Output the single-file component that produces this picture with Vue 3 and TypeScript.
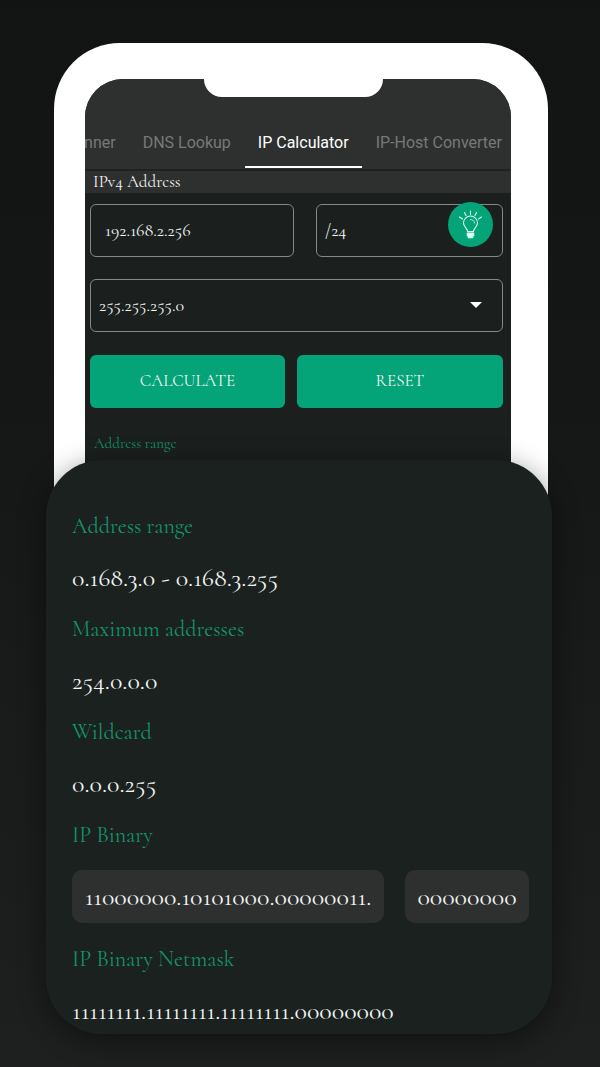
<script setup lang="ts">
import { ref } from 'vue'

interface Result {
  label: string
  value?: string
  parts?: string[]
}

const tabs = ['Scanner', 'DNS Lookup', 'IP Calculator', 'IP-Host Converter']
const activeTab = ref('IP Calculator')
const address = ref('192.168.2.256')
const prefix = ref('/24')
const netmask = ref('255.255.255.0')

const results: Result[] = [
  { label: 'Address range', value: '0.168.3.0 - 0.168.3.255' },
  { label: 'Maximum addresses', value: '254.0.0.0' },
  { label: 'Wildcard', value: '0.0.0.255' },
  { label: 'IP Binary', parts: ['11000000.10101000.00000011.', '00000000'] },
  { label: 'IP Binary Netmask', value: '11111111.11111111.11111111.00000000' },
]

function reset() {
  address.value = ''
  prefix.value = ''
}
</script>

<template>
  <main class="page">
    <section class="phone">
      <div class="screen">
        <div class="notch"></div>
        <nav class="tabs">
          <button
            v-for="tab in tabs"
            :key="tab"
            type="button"
            class="tab"
            :class="{ active: tab === activeTab }"
            @click="activeTab = tab"
          >{{ tab }}</button>
        </nav>
        <label class="band" for="address">IPv4 Address</label>
        <form class="form" @submit.prevent>
          <div class="fields">
            <input id="address" v-model="address" class="control address" type="text" />
            <div class="prefix">
              <input v-model="prefix" class="control" type="text" aria-label="Prefix length" />
              <button class="hint" type="button" aria-label="Hint">
                <svg viewBox="0 0 45 45" width="45" height="45" fill="none" stroke="#d9fff0" stroke-width="1.1" stroke-linecap="round" stroke-linejoin="round">
                  <path d="M19.5 29.500c0-3.500-4-4.500-4-8.500a7 7 0 0 1 14 0c0 4-4 5-4 8.500z" />
                  <path d="M22.500 17.500a3.500 3.500 0 0 1 4 3.500" stroke-width="0.8" />
                  <path d="M19.500 31.500h6M19.500 33.500h6M20.500 35.300h4" stroke-width="1.800" />
                  <path d="M22.500 9v3.500M16.500 10.500l1.500 3M28.500 10.500l-1.500 3M11.500 15l3 2M33.500 15l-3 2" />
                </svg>
              </button>
            </div>
          </div>
          <div class="mask">
            <select v-model="netmask" class="control" aria-label="Subnet mask">
              <option>255.255.255.0</option>
            </select>
            <svg class="arrow" viewBox="0 0 12 6" width="12" height="6" fill="#fff"><path d="M0 0h12L6 6z" /></svg>
          </div>
          <div class="actions">
            <button type="submit" class="action">CALCULATE</button>
            <button type="button" class="action" @click="reset">RESET</button>
          </div>
          <p class="caption">Address range</p>
        </form>
      </div>
    </section>

    <section class="card">
      <dl class="results">
        <div v-for="item in results" :key="item.label" class="result">
          <dt>{{ item.label }}</dt>
          <dd v-if="item.parts" class="parts">
            <span v-for="part in item.parts" :key="part" class="part">{{ part }}</span>
          </dd>
          <dd v-else class="value">{{ item.value }}</dd>
        </div>
      </dl>
    </section>
  </main>
</template>

<style>
body {
  margin: 0;
  background: #191c1b;
}
</style>

<style scoped>
* {
  box-sizing: border-box;
}
.page {
  min-height: 100vh;
  padding: 43px 48px 33px 46px;
  background: linear-gradient(#121413, #161817 45%, #1d201f);
  font-family: Cormorant, "Cormorant Garamond", "Liberation Serif", serif;
  color: #f1f4f3;
}
button,
input,
select {
  font-family: inherit;
  color: inherit;
  margin: 0;
}
.phone {
  margin: 0 4px 0 8px;
  padding: 36px 37px 0 31px;
  background: #fff;
  border-radius: 66px 66px 0 0;
}
.screen {
  position: relative;
  overflow: hidden;
  padding-bottom: 66px;
  border-radius: 38px 38px 0 0;
  background: #1b201e;
}
.notch {
  position: absolute;
  top: 0;
  left: 28%;
  right: 30%;
  height: 18px;
  background: #fff;
  border-radius: 0 0 20px 20px;
}
.tabs {
  display: flex;
  justify-content: flex-end;
  gap: 1px;
  padding: 38px 0 1px;
  background: #2d302f;
  border-bottom: 2px solid #1f2221;
}
.tab {
  flex: none;
  height: 51px;
  padding: 2px 13px 0;
  border: 0;
  border-bottom: 2px solid transparent;
  background: none;
  font: 16px/47px Roboto, sans-serif;
  color: #777978;
}
.tab:last-child {
  padding-right: 9px;
}
.tab.active {
  color: #fff;
  border-bottom-color: #fff;
}
.band {
  display: block;
  padding-left: 8px;
  background: #2e2f2f;
  font-size: 17px;
  line-height: 22px;
}
.form {
  padding: 11px 8px 0 5px;
}
.fields {
  display: grid;
  grid-template-columns: 204fr 187fr;
  gap: 22px;
}
.prefix,
.mask {
  position: relative;
}
.control {
  display: block;
  width: 100%;
  height: 53px;
  padding: 0 8px 2px;
  border: 1px solid #858987;
  border-radius: 6px;
  background: transparent;
  font-size: 18px;
  appearance: none;
}
.address {
  padding-left: 14px;
}
.hint {
  position: absolute;
  top: -2px;
  right: 10px;
  width: 45px;
  height: 45px;
  padding: 0;
  border: 0;
  border-radius: 50%;
  background: #04a478;
}
.hint svg {
  display: block;
}
.mask {
  margin-top: 22px;
}
.arrow {
  position: absolute;
  top: 23px;
  right: 21px;
  pointer-events: none;
}
.actions {
  display: grid;
  grid-template-columns: 195fr 206fr;
  gap: 12px;
  margin-top: 23px;
}
.action {
  height: 53px;
  padding: 0 0 2px;
  border: 0;
  border-radius: 6px;
  background: #04a478;
  font-size: 17px;
}
.caption {
  margin: 25px 0 0 4px;
  font-size: 15px;
  line-height: 20px;
  color: #14946b;
}
.card {
  position: relative;
  margin-top: -59px;
  padding: 51px 23px 8px 26px;
  border-radius: 56px;
  background: #1b211f;
  box-shadow: 0 6px 28px rgba(0, 0, 0, 0.45);
}
.results {
  display: grid;
  gap: 21px;
  margin: 0;
}
dt {
  font-size: 22px;
  line-height: 30px;
  color: #14946b;
}
dd {
  margin: 0;
}
.value {
  margin-top: 22px;
  font-size: 26px;
  line-height: 30px;
}
.parts {
  display: grid;
  grid-template-columns: 312fr 124fr;
  gap: 21px;
  margin-top: 20px;
}
.part {
  border-radius: 10px;
  background: #2d302f;
  font-size: 26px;
  line-height: 53px;
  text-align: center;
}
</style>
